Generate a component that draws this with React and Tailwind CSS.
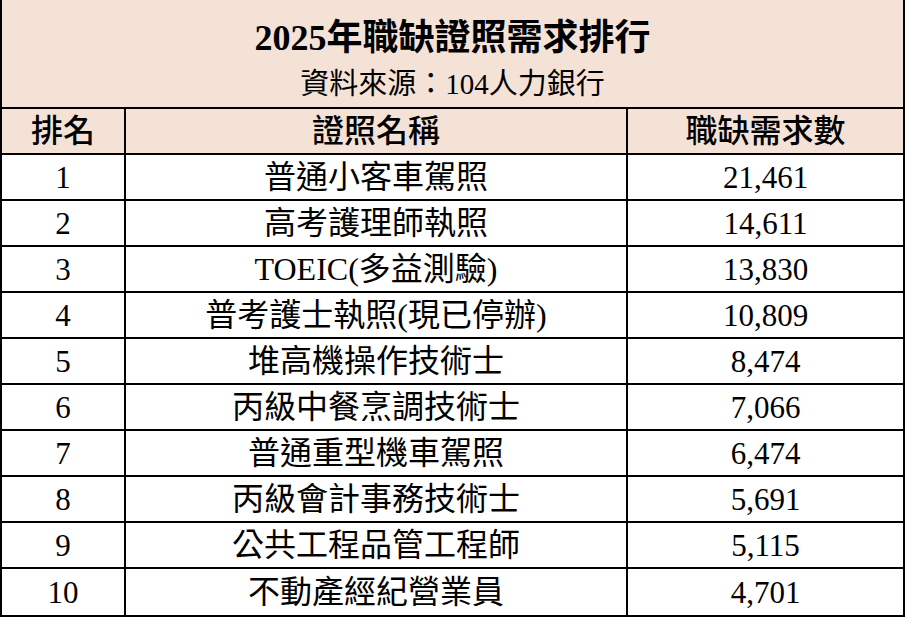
import React from 'react';

const rows = [
    ['1', '普通小客車駕照', '21,461'],
    ['2', '高考護理師執照', '14,611'],
    ['3', 'TOEIC(多益測驗)', '13,830'],
    ['4', '普考護士執照(現已停辦)', '10,809'],
    ['5', '堆高機操作技術士', '8,474'],
    ['6', '丙級中餐烹調技術士', '7,066'],
    ['7', '普通重型機車駕照', '6,474'],
    ['8', '丙級會計事務技術士', '5,691'],
    ['9', '公共工程品管工程師', '5,115'],
    ['10', '不動產經紀營業員', '4,701'],
];

const font = { fontFamily: '"Liberation Serif", "Noto Sans CJK TC", serif' };

const Row = ({ cells, header, last }) => (
    <div className={`grid grid-cols-[122px_2px_500px_2px_1fr] h-[46px] ${last ? '' : 'border-b-2 border-black'} ${header ? 'bg-[#f5e2d7] font-medium text-[32px]' : 'bg-white'}`}>
        <div className={`flex items-center justify-center ${header ? '' : 'text-[31px]'}`}>{cells[0]}</div>
        <div className="bg-black" />
        <div className={`flex items-center justify-center ${header ? '' : 'text-[32px]'}`}>{cells[1]}</div>
        <div className="bg-black" />
        <div className={`flex items-center justify-center ${header ? '' : 'text-[31px]'}`}>{cells[2]}</div>
    </div>
);

const App = () => {
    return (
        <div className="w-[905px] bg-white text-black" style={font}>
            <div className="border-x-2 border-b-2 border-black">
                <div className="h-[109px] bg-[#f5e2d7] border-b-2 border-black flex flex-col items-center pt-[16px]">
                    <h1 className="text-[36px] leading-[44px] font-bold">2025年職缺證照需求排行</h1>
                    <p className="mt-[6px] text-[29px] leading-[36px]">資料來源：104人力銀行</p>
                </div>
                <div className="leading-none">
                    <Row header cells={['排名', '證照名稱', '職缺需求數']} />
                    {rows.map((r, i) => (
                        <Row key={r[0]} cells={r} last={i === rows.length - 1} />
                    ))}
                </div>
            </div>
        </div>
    );
};

export default App;
